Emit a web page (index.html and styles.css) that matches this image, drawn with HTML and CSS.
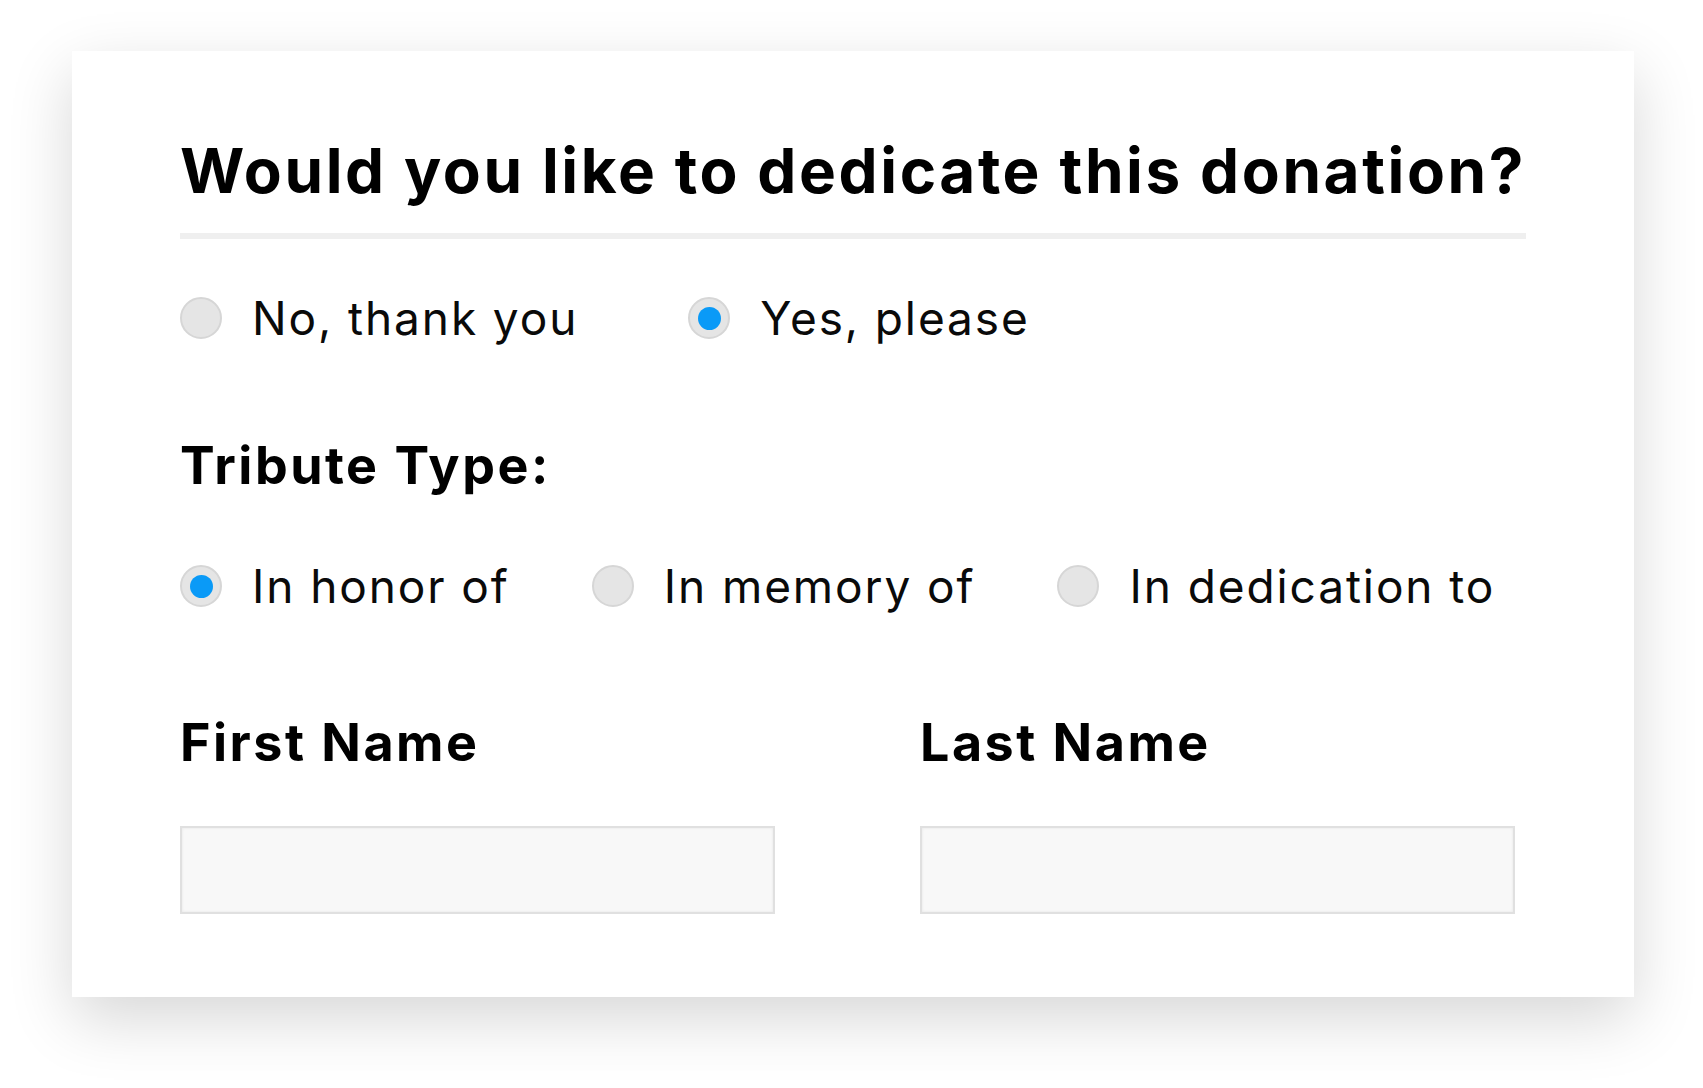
FILE: index.html
```html
<!DOCTYPE html>
<html lang="en">
<head>
<meta charset="utf-8">
<title>Dedicate donation</title>
<link rel="stylesheet" href="styles.css">
</head>
<body>
<div class="card">
  <h1 class="title">Would you like to dedicate this donation?</h1>
  <div class="divider"></div>
  <div class="options options-yn">
    <label class="option"><span class="radio"></span><span class="opt-text">No, thank you</span></label>
    <label class="option"><span class="radio checked"></span><span class="opt-text">Yes, please</span></label>
  </div>
  <h2 class="label label-tribute">Tribute Type:</h2>
  <div class="options options-type">
    <label class="option"><span class="radio checked"></span><span class="opt-text">In honor of</span></label>
    <label class="option"><span class="radio"></span><span class="opt-text">In memory of</span></label>
    <label class="option"><span class="radio"></span><span class="opt-text">In dedication to</span></label>
  </div>
  <div class="names">
    <div class="field">
      <h2 class="label">First Name</h2>
      <div class="input"></div>
    </div>
    <div class="field">
      <h2 class="label">Last Name</h2>
      <div class="input"></div>
    </div>
  </div>
</div>
</body>
</html>
```

FILE: styles.css
```css
html, body {
  margin: 0;
  padding: 0;
  background: #ffffff;
}
body {
  font-family: "Inter", "Liberation Sans", sans-serif;
  color: #000;
  width: 1703px;
  height: 1088px;
  overflow: hidden;
}
.card {
  box-sizing: border-box;
  margin: 51px 0 0 72px;
  width: 1562px;
  height: 946px;
  background: #fff;
  padding: 84px 108px 0 108px;
  box-shadow: 0 22px 60px rgba(0, 0, 0, 0.16);
}
.title {
  margin: 0;
  font-size: 62px;
  line-height: 72px;
  font-weight: 700;
  letter-spacing: 2.6px;
  white-space: nowrap;
}
.divider {
  margin-top: 26px;
  height: 6px;
  background: #efefef;
}
.options {
  display: flex;
  align-items: center;
  height: 60px;
}
.options-yn {
  margin-top: 49px;
  gap: 110px;
}
.options-type {
  margin-top: 58px;
  gap: 82px;
}
.option {
  display: flex;
  align-items: center;
  gap: 30px;
}
.radio {
  box-sizing: border-box;
  width: 42px;
  height: 42px;
  border-radius: 50%;
  background: #e5e5e5;
  border: 2px solid #d6d6d6;
  display: flex;
  align-items: center;
  justify-content: center;
  flex: none;
}
.radio.checked::after {
  content: "";
  width: 23px;
  height: 23px;
  border-radius: 50%;
  background: #0a9af7;
}
.opt-text {
  font-size: 46px;
  line-height: 60px;
  font-weight: 400;
  letter-spacing: 1.9px;
  color: #0a0a0a;
  white-space: nowrap;
}
.label {
  margin: 0;
  font-size: 52px;
  line-height: 64px;
  font-weight: 700;
  letter-spacing: 2.5px;
  white-space: nowrap;
}
.label-tribute {
  margin-top: 86px;
}
.names {
  margin-top: 95px;
  display: flex;
  gap: 145px;
}
.field {
  width: 595px;
}
.input {
  box-sizing: border-box;
  margin-top: 51px;
  height: 88px;
  background: #f8f8f8;
  border: 2px solid #e0e0e0;
  box-shadow: inset 0 0 3px rgba(0, 0, 0, 0.08);
}
```
